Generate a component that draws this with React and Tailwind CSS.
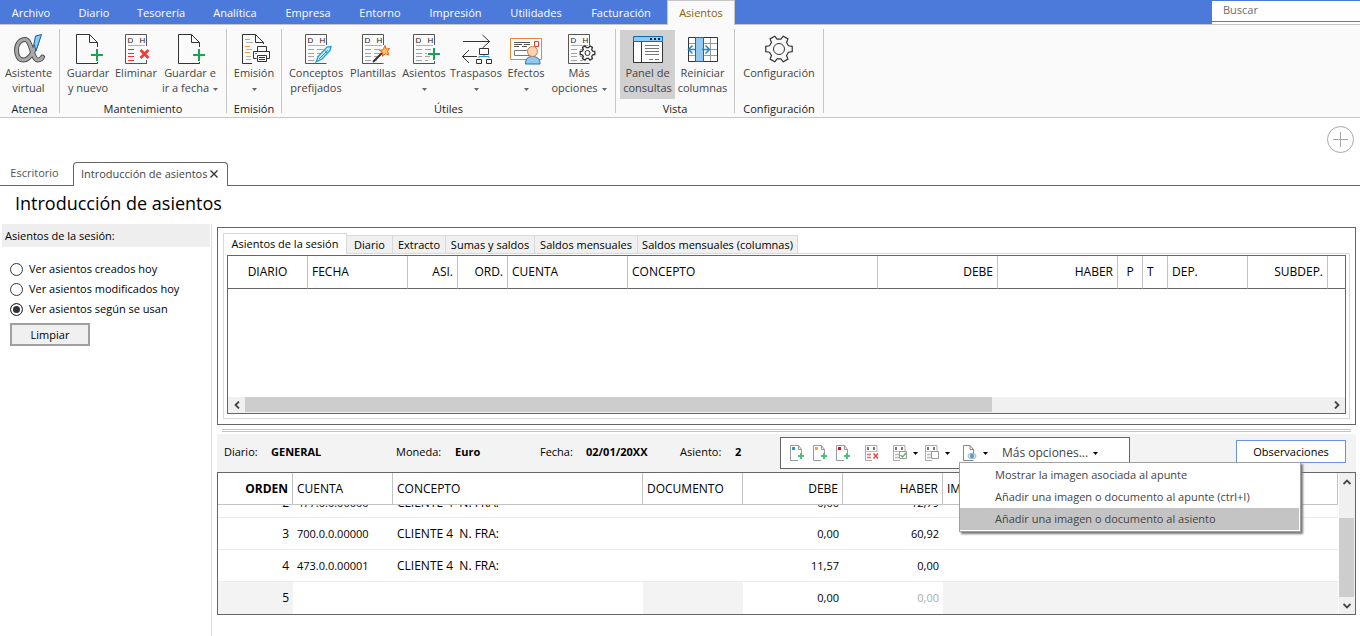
import React from 'react';

const Doc = ({ lines = '#a3a3a3', rightCut = 13 }) => (
  <g fill="none">
    <path d={`M26.500 ${rightCut}V2.500H5.500V31.500H26.500`} stroke="#555" />
    <g fill="#222" stroke="none" fontFamily="Liberation Sans, sans-serif" fontSize="8">
      <text x="7.500" y="11">D</text>
      <text x="19.500" y="11">H</text>
    </g>
    <path d="M8 13.500H25" stroke="#b0b0b0" />
    <path d="M8 17.500h6M8 21.500h6M8 24.500h6M8 28.500h6" stroke={lines} />
  </g>
);

const DocText = () => <path d="M17 17.500h6M17 21.500h6M17 24.500h5M17 28.500h3" stroke="#a3a3a3" />;

function gearPath(cx, cy, r, ri) {
  const pts = [];
  for (let i = 0; i < 6; i++) {
    const a = (i * Math.PI) / 3;
    [[-0.33, ri], [-0.2, r], [0.2, r], [0.33, ri]].forEach(([d, q]) => {
      pts.push(`${(cx + q * Math.cos(a + d)).toFixed(2)} ${(cy + q * Math.sin(a + d)).toFixed(2)}`);
    });
  }
  return `M${pts.join('L')}Z`;
}

const Ico = ({ children }) => (
  <svg width="32" height="33" viewBox="0 0 32 33" fill="none" className="block shrink-0 overflow-visible" aria-hidden="true">
    {children}
  </svg>
);

const ALPHA = 'M25 5.500C23 15 18 28 10.500 28C5.500 28 3.500 23 3.500 18C3.500 12 7 7.500 12 7.500C19 7.500 18.500 28 25 28C27 28 28.500 27 29.500 25';

const IconAlpha = () => (
  <Ico>
    <g strokeLinecap="round" strokeLinejoin="round">
      <path d={ALPHA} stroke="#4f4f4f" strokeWidth="5" />
      <path d={ALPHA} stroke="#a9a9a9" strokeWidth="3" />
    </g>
    <path d="M22.500 4L28.500 2.500L23 19L21 11.500Z" fill="#8cc8f0" stroke="#1565b0" />
  </Ico>
);

const IconPagePlus = () => (
  <Ico>
    <path d="M25.500 15V10.500L17.500 2.500H4.500V31.500H25.500V30M17.500 2.500V10.500H25.500" stroke="#333" />
    <path d="M19 23H31M25 17V29" stroke="#16a651" strokeWidth="2" />
  </Ico>
);

const IconDelete = () => (
  <Ico>
    <Doc lines="#e33" rightCut={14} />
    <path d="M26.500 28V32" stroke="#555" />
    <path d="M20.500 18L28.500 26M28.500 18L20.500 26" stroke="#ee3a3a" strokeWidth="2.600" />
  </Ico>
);

const IconPrint = () => (
  <Ico>
    <path d="M25.500 12V10.500L17.500 2.500H4.500V31.500H14M17.500 2.500V10.500H25.500" stroke="#333" />
    <path d="M7 7.500h5M7 14.500h5M7 20.500h5" stroke="#f29a2e" />
    <path d="M8 10.500h7M8 17.500h6M8 24.500h5M8 27.500h5" stroke="#b0b0b0" />
    <path d="M19.500 19V14.500H28.500V19M18.500 26.500H15.500V19.500H31.500V26.500H29M19.500 23.500H28.500V29.500H19.500ZM21 25.500h6M21 27.500h6" stroke="#333" />
    <path d="M17 21.500h2" stroke="#2a8fd8" />
  </Ico>
);

const IconPen = () => (
  <Ico>
    <Doc /><DocText />
    <path d="M16 30L18.500 24L27 15L31 14.500L30 18.500L22 27Z" fill="#c9ecfa" stroke="#1a9fdc" strokeWidth="1.300" />
    <path d="M19 27L28 18M24 17.500L27 21" stroke="#1a9fdc" />
  </Ico>
);

const IconWand = () => (
  <Ico>
    <Doc /><DocText />
    <path d="M16 30L25 21" stroke="#333" strokeWidth="2" />
    <path d="M28 13.500L29.300 17L32.500 16.500L30.500 19.500L32 23L28.300 21.800L25.500 24.200L25.500 20.300L22.500 18.500L26.300 17.500Z" fill="#fbc15e" stroke="#e8651c" />
  </Ico>
);

const IconDocPlus = () => (
  <Ico>
    <Doc /><DocText />
    <path d="M26.500 29V32" stroke="#555" />
    <path d="M19 22H32M25.500 16V29" stroke="#fafafa" strokeWidth="4" />
    <path d="M20 22H32M26 16V28" stroke="#16a651" strokeWidth="2" />
  </Ico>
);

const IconTransfer = () => (
  <Ico>
    <path d="M3 9.500H29.500M22.500 3L29.500 9.500L22.500 16M17 24.500H2.500M9 18L2.500 24.500L9 31" stroke="#333" />
    <path d="M19.500 16.500h9v6h-9ZM16.500 27.500h5v4h-5ZM26.500 27.500h5v4h-5Z" stroke="#333" />
    <path d="M19 26V24.500H29V26M24 23V24.500" stroke="#2f97dd" />
  </Ico>
);

const IconEffects = () => (
  <Ico>
    <path d="M.5 6.500h31v21H.5Z" fill="#fff" stroke="#ee8630" />
    <path d="M4 10.500h16M4 12.500h8M14 12.500h6M4 14.500h5M12 14.500h5" stroke="#555" />
    <path d="M24.500 9.500h4v5h-4Z" stroke="#e33" />
    <path d="M4.500 18.500h16v5h-16Z" stroke="#777" />
    <path d="M15.500 32C15.500 26.500 18 24.500 22.500 24.500C27 24.500 30 26.500 30 32Z" fill="#92c9ef" stroke="#1f74ba" />
    <circle cx="22.500" cy="19.500" r="5" fill="#fbd3ae" stroke="#cb7e49" />
  </Ico>
);

const IconDocGear = () => (
  <Ico>
    <Doc /><DocText />
    <path d={gearPath(24.5, 21, 7.5, 5.5)} fill="#fafafa" stroke="#333" strokeWidth="1.300" strokeLinejoin="round" />
    <circle cx="24.500" cy="21" r="2.500" stroke="#333" />
  </Ico>
);

const IconPanel = () => (
  <Ico>
    <path d="M1.500 9.500h29v21h-29Z" fill="#fff" stroke="#333" />
    <path d="M1.500 4.500h29v5h-29Z" fill="#93c9f0" stroke="#0f6cb4" />
    <path d="M18 7h2M22 7h2M26 7h2" stroke="#222" strokeWidth="2" />
    <path d="M9.500 10V30" stroke="#333" />
    <path d="M13 13.500h14M13 16.500h14M13 19.500h14M13 22.500h14M17 27.500h4M23 27.500h4" stroke="#777" />
  </Ico>
);

const IconColumns = () => (
  <Ico>
    <path d="M1.500 5.500h29v24h-29Z" fill="#fff" stroke="#333" />
    <path d="M2 11.500h28M2 17.500h28M2 23.500h28M23.500 6V29" stroke="#999" />
    <path d="M8.500 5.500h8v24h-8Z" fill="#93c9f0" stroke="#0f6cb4" />
    <path d="M8 17.500H2M5.500 13.500L1.500 17.500L5.500 21.500M15 17.500H22M18.500 13.500L22.500 17.500L18.500 21.500" stroke="#2186cf" strokeWidth="1.500" />
  </Ico>
);

const IconGear = () => (
  <Ico>
    <path d={gearPath(16, 17, 13.5, 10)} stroke="#333" strokeWidth="1.200" strokeLinejoin="round" />
    <circle cx="16" cy="17" r="5.500" stroke="#333" />
  </Ico>
);

const Caret = ({ className = 'text-[#666]' }) => (
  <svg width="5" height="3" viewBox="0 0 5 3" className={`inline-block align-middle ${className}`} aria-hidden="true">
    <path d="M0 0H5L2.500 3Z" fill="currentColor" />
  </svg>
);

const groups = [
  { label: 'Atenea', w: 'w-[60px]', pad: 'pr-[2px]', items: [{ icon: <IconAlpha />, a: 'Asistente', b: 'virtual', w: 'w-[56px]' }] },
  {
    label: 'Mantenimiento', w: 'w-[167px]', pad: 'pr-[2px]',
    items: [
      { icon: <IconPagePlus />, a: 'Guardar', b: 'y nuevo', w: 'w-[48px]' },
      { icon: <IconDelete />, a: 'Eliminar', w: 'w-[48px]' },
      { icon: <IconPagePlus />, a: 'Guardar e', b: 'ir a fecha', caret: true, w: 'w-[60px]' },
    ],
  },
  { label: 'Emisión', w: 'w-[55px]', pad: '', items: [{ icon: <IconPrint />, a: 'Emisión', caret: true, w: 'w-[54px]' }] },
  {
    label: 'Útiles', w: 'w-[334px]', pad: 'pr-[3px]',
    items: [
      { icon: <IconPen />, a: 'Conceptos', b: 'prefijados', w: 'w-[62px]' },
      { icon: <IconWand />, a: 'Plantillas', w: 'w-[52px]' },
      { icon: <IconDocPlus />, a: 'Asientos', caret: true, w: 'w-[50px]' },
      { icon: <IconTransfer />, a: 'Traspasos', caret: true, w: 'w-[54px]' },
      { icon: <IconEffects />, a: 'Efectos', caret: true, w: 'w-[46px]' },
      { icon: <IconDocGear />, a: 'Más', b: 'opciones', caret: true, w: 'w-[60px]' },
    ],
  },
  {
    label: 'Vista', w: 'w-[119px]', pad: '',
    items: [
      { icon: <IconPanel />, a: 'Panel de', b: 'consultas', active: true, w: 'w-[55px]' },
      { icon: <IconColumns />, a: 'Reiniciar', b: 'columnas', w: 'w-[55px]' },
    ],
  },
  { label: 'Configuración', w: 'w-[89px]', pad: '', items: [{ icon: <IconGear />, a: 'Configuración', w: 'w-[84px]' }] },
];

const menus = [
  ['Archivo', 'w-[62px]'], ['Diario', 'w-[64px]'], ['Tesorería', 'w-[70px]'], ['Analítica', 'w-[78px]'],
  ['Empresa', 'w-[68px]'], ['Entorno', 'w-[76px]'], ['Impresión', 'w-[75px]'], ['Utilidades', 'w-[86px]'], ['Facturación', 'w-[84px]'],
];

const Ribbon = () => (
  <header>
    <div className="flex h-6 bg-[#4c7adb]">
      <nav className="flex">
        {menus.map(([m, w]) => (
          <button key={m} type="button" className={`${w} shrink-0 whitespace-nowrap pt-[2px] text-center text-white`}>{m}</button>
        ))}
        <button type="button" className="relative -mb-px ml-1 w-[68px] shrink-0 border border-b-0 border-[#c6c6c6] bg-[#fafafa] text-[#8b6100]">Asientos</button>
      </nav>
      <div className="ml-auto mt-px w-[148px] bg-white">
        <input aria-label="Buscar" placeholder="Buscar" className="block h-[21px] w-full border-b border-[#777] bg-white pb-1 pl-[11px] outline-none placeholder:text-[#6b6b6b]" />
      </div>
    </div>
    <div className="flex h-[94px] border-y border-[#c6c6c6] bg-[#fafafa] py-1">
      {groups.map((g) => (
        <section key={g.label} className={`${g.w} flex shrink-0 flex-col items-center border-r border-[#c6c6c6] pt-px`}>
          <div className={`${g.pad} flex h-[71px] shrink-0`}>
            {g.items.map((it) => (
              <button
                key={it.a}
                type="button"
                className={`${it.w} flex h-[69px] shrink-0 flex-col items-center whitespace-nowrap pt-[2px] leading-[15px] text-[#444] ${it.active ? 'bg-[#d0d0d0]' : ''}`}
              >
                {it.icon}
                <span>{it.a}</span>
                <span>{it.b}{it.caret && <Caret className={it.b ? 'ml-1 text-[#666]' : 'text-[#666]'} />}</span>
              </button>
            ))}
          </div>
          <h2 className="shrink-0 whitespace-nowrap text-[#222]">{g.label}</h2>
        </section>
      ))}
    </div>
  </header>
);

const sessionTabs = [
  ['Diario', 'w-[46px]'], ['Extracto', 'w-[53px]'], ['Sumas y saldos', 'w-[89px]'],
  ['Saldos mensuales', 'w-[103px]'], ['Saldos mensuales (columnas)', 'w-[160px]'],
];

const sessionCols = [
  ['DIARIO', 'w-[80px]', 'text-center'], ['FECHA', 'w-[100px]', 'text-left'], ['ASI.', 'w-[50px]', 'text-right'],
  ['ORD.', 'w-[50px]', 'text-right'], ['CUENTA', 'w-[120px]', 'text-left'], ['CONCEPTO', 'w-[250px]', 'text-left'],
  ['DEBE', 'w-[120px]', 'text-right'], ['HABER', 'w-[120px]', 'text-right'], ['P', 'w-[25px]', 'text-center'],
  ['T', 'w-[25px]', 'text-left'], ['DEP.', 'w-[80px]', 'text-left'], ['SUBDEP.', 'w-[80px]', 'text-right'],
];

const Chevron = ({ d }) => (
  <svg width="8" height="8" viewBox="0 0 8 8" fill="none" stroke="#444" strokeWidth="1.800" aria-hidden="true"><path d={d} /></svg>
);

const SessionPanel = () => (
  <section className="border border-[#666] bg-white p-[5px]">
    <div className="flex h-5 items-end">
      <button type="button" className="relative -mb-px h-[21px] w-[124px] shrink-0 whitespace-nowrap border border-b-0 border-[#d9d9d9] bg-white">Asientos de la sesión</button>
      {sessionTabs.map(([t, w]) => (
        <button key={t} type="button" className={`${w} h-[18px] shrink-0 whitespace-nowrap border-r border-t border-[#d9d9d9] bg-[#f0f0f0]`}>{t}</button>
      ))}
    </div>
    <div className="border border-[#d9d9d9] px-[3px] pb-1 pt-px">
      <div className="border border-[#666]">
        <table className="w-full table-fixed border-separate border-spacing-0 text-[12px]">
          <thead>
            <tr className="h-[33px]">
              {sessionCols.map(([c, w, al]) => (
                <th key={c} scope="col" className={`${w} ${al} border-b border-r border-b-[#666] border-r-[#c3c3c3] px-1 py-0 font-normal`}>{c}</th>
              ))}
              <td className="border-b border-[#666] p-0" />
            </tr>
          </thead>
        </table>
        <div className="h-[108px]" />
        <div className="flex h-4 bg-[#f0f0f0]">
          <button type="button" aria-label="Desplazar a la izquierda" className="flex w-[17px] items-center justify-center"><Chevron d="M6 .5L2.500 4L6 7.500" /></button>
          <div className="flex-1"><div className="h-[15px] w-[69%] bg-[#cdcdcd]" /></div>
          <button type="button" aria-label="Desplazar a la derecha" className="flex w-[17px] items-center justify-center"><Chevron d="M2 .5L5.500 4L2 7.500" /></button>
        </div>
      </div>
    </div>
  </section>
);

const SmallPage = ({ color }) => (
  <svg width="15" height="16" viewBox="0 0 15 16" fill="none" aria-hidden="true">
    <path d="M11.500 8V4.500L8.500.5H.5V15.500H8M8.500.5V4.500H11.500" stroke="#999" />
    <path d="M2 2h3v3h-3Z" fill={color} />
    <path d="M8 11H14M11 8V14" stroke="#4fc077" strokeWidth="2" />
  </svg>
);

const SmallGrid = ({ mark }) => (
  <svg width="15" height="16" viewBox="0 0 15 16" fill="none" aria-hidden="true">
    <path d="M12 7V.5H.5V15.500H7" stroke="#aaa" />
    <path d="M3 2v3M9 2v3" stroke="#777" strokeWidth="2" />
    <path d="M1 6.500h11" stroke="#bbb" />
    <path d="M2 9.500h4M2 12.500h4" stroke={mark === 'x' ? '#ee6a6a' : '#bbb'} strokeWidth="1.500" />
    {mark === 'x' && <path d="M8.500 8.500L13 13.500M13 8.500L8.500 13.500" stroke="#e44" strokeWidth="1.500" />}
    {mark !== 'x' && <path d="M6.500 6.500h7v7h-7Z" fill="#fff" stroke="#999" />}
    {mark === 'check' && <path d="M7.500 10L9.500 12L13 8" stroke="#4fb477" strokeWidth="1.300" />}
  </svg>
);

const EyePage = () => (
  <svg width="14" height="16" viewBox="0 0 14 16" fill="none" aria-hidden="true">
    <path d="M10.500 8V4.500L7 .5H.5V15.500H10.500M7 .5V4.500H10.500" stroke="#888" />
    <ellipse cx="9" cy="11" rx="4" ry="2.800" fill="#e3edf5" stroke="#9db9cc" />
    <circle cx="9" cy="11" r="2.200" fill="#5b9fd0" />
  </svg>
);

const Tool = ({ label, className, children }) => (
  <button type="button" aria-label={label} className={`flex shrink-0 items-center ${className}`}>{children}</button>
);

const menuItems = ['Mostrar la imagen asociada al apunte', 'Añadir una imagen o documento al apunte (ctrl+I)', 'Añadir una imagen o documento al asiento'];

const Toolbar = () => (
  <div className="relative flex h-8 w-[350px] shrink-0 items-center border border-[#666] bg-white pl-[9px]">
    <Tool label="Insertar apunte azul" className="w-[23px]"><SmallPage color="#1a9be0" /></Tool>
    <Tool label="Insertar apunte naranja" className="w-[23px]"><SmallPage color="#f0a838" /></Tool>
    <Tool label="Insertar apunte rojo" className="w-[29px]"><SmallPage color="#d80f2a" /></Tool>
    <Tool label="Eliminar apunte" className="w-[28px]"><SmallGrid mark="x" /></Tool>
    <Tool label="Marcar apuntes" className="w-[32px] gap-[5px]"><SmallGrid mark="check" /><Caret className="text-black" /></Tool>
    <Tool label="Desmarcar apuntes" className="w-[38px] gap-[5px]"><SmallGrid /><Caret className="text-black" /></Tool>
    <Tool label="Imagen asociada" className="w-[39px] gap-[6px]"><EyePage /><Caret className="text-black" /></Tool>
    <button type="button" className="flex items-center gap-[5px] whitespace-nowrap text-[12px] text-[#444]">Más opciones...<Caret className="text-black" /></button>
    <ul role="menu" className="absolute left-[178px] top-6 z-10 w-[342px] border border-[#a0a0a0] bg-white py-px pr-px text-[#444] shadow-[2px_2px_2px_#777]">
      {menuItems.map((m, i) => (
        <li key={m} role="none">
          <button type="button" role="menuitem" className={`block h-[22px] w-full whitespace-nowrap pl-[35px] text-left ${i === 2 ? 'bg-[#c4c4c4]' : ''}`}>{m}</button>
        </li>
      ))}
    </ul>
  </div>
);

const Field = ({ label, value, w, lw }) => (
  <div className={`${w} flex shrink-0`}>
    <dt className={`${lw} shrink-0`}>{label}</dt>
    <dd className="font-bold">{value}</dd>
  </div>
);

const entryCols = [
  ['ORDEN', 'w-[75px]', 'text-right font-bold'], ['CUENTA', 'w-[100px]', 'text-left font-normal'],
  ['CONCEPTO', 'w-[250px]', 'text-left font-normal'], ['DOCUMENTO', 'w-[100px]', 'text-left font-normal'],
  ['DEBE', 'w-[100px]', 'text-right font-normal'], ['HABER', 'w-[100px]', 'text-right font-normal'], ['IMAGEN', '', 'text-left font-normal'],
];

const entries = [
  ['3', '700.0.0.00000', 'CLIENTE 4  N. FRA:', '', '0,00', '60,92', ''],
  ['4', '473.0.0.00001', 'CLIENTE 4  N. FRA:', '', '11,57', '0,00', ''],
];

const cellStyle = ['text-right', 'text-left text-[11px]', 'text-left', 'text-left', 'text-right text-[11px]', 'text-right text-[11px]', 'text-left'];

const EntryTable = () => (
  <div className="flex border border-[#666] bg-white">
    <div className="min-w-0 flex-1">
      <table className="w-full table-fixed border-separate border-spacing-0 text-[12px]">
        <thead>
          <tr className="h-8">
            {entryCols.map(([c, w, cls]) => (
              <th key={c} scope="col" className={`${w} ${cls} border-b border-r border-[#c3c3c3] px-1 py-0`}>{c}</th>
            ))}
          </tr>
        </thead>
        <tbody>
          <tr className="h-[13px]">
            {['2', '477.0.0.00000', 'CLIENTE 4  N. FRA:', '', '0,00', '12,79', ''].map((v, i) => (
              <td key={i} className={`${cellStyle[i]} border-b border-[#ececec] px-1 py-0`}>
                <div className={`flex h-3 items-end overflow-hidden whitespace-pre ${i === 0 || i === 4 || i === 5 ? 'justify-end' : ''}`}>
                  {v && <span className="h-8 leading-9">{v}</span>}
                </div>
              </td>
            ))}
          </tr>
          {entries.map((row) => (
            <tr key={row[0]} className="h-8">
              {row.map((v, i) => <td key={i} className={`${cellStyle[i]} whitespace-pre border-b border-[#ececec] px-1 py-0`}>{v}</td>)}
            </tr>
          ))}
          <tr className="h-8">
            <td className="bg-[#f3f3f3] px-1 py-0 text-right">5</td>
            <td /><td />
            <td className="bg-[#f3f3f3]" />
            <td className="px-1 py-0 text-right text-[11px]">0,00</td>
            <td className="px-1 py-0 text-right text-[11px] text-[#aaa]">0,00</td>
            <td className="bg-[#f3f3f3]" />
          </tr>
        </tbody>
      </table>
    </div>
    <div className="ml-px flex w-4 flex-col bg-[#f0f0f0]">
      <button type="button" aria-label="Subir" className="flex h-[17px] items-center justify-center"><Chevron d="M.5 6L4 2.500L7.500 6" /></button>
      <div className="flex flex-1 flex-col pt-7"><div className="w-[15px] flex-1 bg-[#cdcdcd]" /></div>
      <button type="button" aria-label="Bajar" className="flex h-[17px] items-center justify-center"><Chevron d="M.5 2L4 5.500L7.500 2" /></button>
    </div>
  </div>
);

const radios = ['Ver asientos creados hoy', 'Ver asientos modificados hoy', 'Ver asientos según se usan'];

export default function App() {
  return (
    <div className="flex min-h-screen flex-col overflow-x-hidden bg-white font-['Open_Sans','Noto_Sans',sans-serif] text-[11px] leading-4 text-black">
      <Ribbon />
      <div className="flex h-11 justify-end pr-[6px] pt-2">
        <button type="button" aria-label="Añadir" className="h-[27px] w-[27px]">
          <svg width="27" height="27" viewBox="0 0 27 27" fill="none" stroke="#a6a6a6" aria-hidden="true">
            <circle cx="13.500" cy="13.500" r="13" /><path d="M13.500 6V21M6 13.500H21" />
          </svg>
        </button>
      </div>
      <div className="flex h-6">
        <button type="button" className="w-[73px] border-b border-[#666] pb-px pr-1 text-[#555]">Escritorio</button>
        <div className="flex w-[155px] items-center justify-between rounded-t-[4px] border border-b-0 border-[#666] pb-[2px] pl-[7px] pr-[9px] text-[#444]">
          <button type="button" className="whitespace-nowrap">Introducción de asientos</button>
          <button type="button" aria-label="Cerrar pestaña">
            <svg width="8" height="8" viewBox="0 0 8 8" stroke="#333" strokeWidth="1.400" aria-hidden="true"><path d="M.5.5L7.500 7.500M7.500.5L.5 7.500" /></svg>
          </button>
        </div>
        <div className="flex-1 border-b border-[#666]" />
      </div>
      <h1 className="flex h-[38px] items-center pb-1 pl-[15px] text-[18px]">Introducción de asientos</h1>
      <div className="flex flex-1">
        <aside className="w-[212px] shrink-0 border-r border-[#dcdcdc] pl-[2px] pr-px">
          <h2 className="flex h-[23px] items-center bg-[#eee] pl-[3px]">Asientos de la sesión:</h2>
          <div className="flex flex-col pl-2 pt-3">
            {radios.map((r, i) => (
              <label key={r} className="flex h-5 items-center gap-[6px]">
                <input type="radio" name="vista" defaultChecked={i === 2} className="h-[13px] w-[13px] appearance-none rounded-full border border-[#333] bg-white checked:bg-[#333] checked:shadow-[inset_0_0_0_2px_white]" />
                {r}
              </label>
            ))}
            <button type="button" className="mt-1 h-[23px] w-20 border-2 border-[#a0a0a0] bg-[#f0f0f0] leading-[19px]">Limpiar</button>
          </div>
        </aside>
        <main className="min-w-0 flex-1 pl-[5px] pr-1 pt-[3px]">
          <SessionPanel />
          <div className="mx-[5px] mt-1 h-[3px] border-y border-[#c3c3c3]" />
          <section className="mt-[2px]">
            <div className="flex h-[38px] items-start bg-[#f3f3f3] pr-[10px] pt-[3px]">
              <dl className="flex w-[563px] shrink-0 pl-[7px] pt-[7px]">
                <Field label="Diario:" value="GENERAL" w="w-[172px]" lw="w-[47px]" />
                <Field label="Moneda:" value="Euro" w="w-[144px]" lw="w-[59px]" />
                <Field label="Fecha:" value="02/01/20XX" w="w-[140px]" lw="w-[46px]" />
                <Field label="Asiento:" value="2" w="w-[100px]" lw="w-[55px]" />
              </dl>
              <Toolbar />
              <button type="button" className="ml-auto mt-[3px] h-[23px] w-[110px] border border-[#6a90e0] bg-white">Observaciones</button>
            </div>
            <EntryTable />
          </section>
        </main>
      </div>
    </div>
  );
}
